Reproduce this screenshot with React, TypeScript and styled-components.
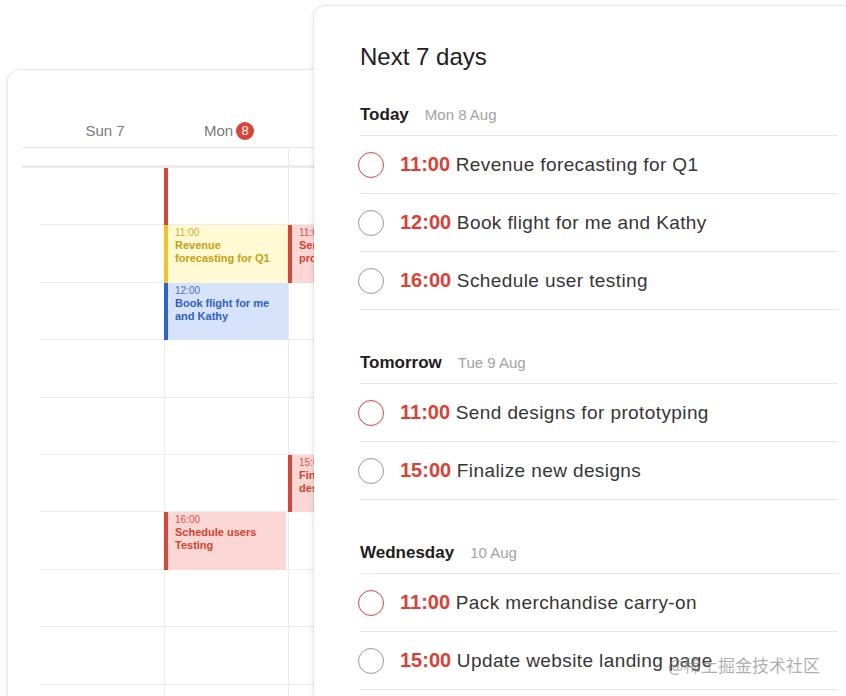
import styled, { createGlobalStyle } from "styled-components";

const GlobalStyle = createGlobalStyle`
  html, body {
    margin: 0;
    padding: 0;
    background: #ffffff;
    overflow: hidden;
  }
  body {
    font-family: "Liberation Sans", Arial, sans-serif;
  }
  * {
    box-sizing: border-box;
  }
`;

type Tone = "red" | "yellow" | "blue" | "bar";

const tones: Record<Tone, { bg: string; bar: string; text: string }> = {
  red: { bg: "#fbd8d5", bar: "#dc4535", text: "#d8412f" },
  yellow: { bg: "#fffad3", bar: "#f4c425", text: "#c8a00e" },
  blue: { bg: "#d7e3fb", bar: "#2e62d3", text: "#2d61c9" },
  bar: { bg: "transparent", bar: "#dc4535", text: "#d8412f" },
};

const Stage = styled.div`
  position: relative;
  width: 846px;
  height: 696px;
  padding: 70px 0 0 8px;
  overflow: hidden;
`;

// calendar window
const CalendarCard = styled.div`
  width: 480px;
  height: 720px;
  background: #ffffff;
  border-radius: 12px;
  box-shadow: 0 0 0 1px rgba(0, 0, 0, 0.05), 0 1px 6px rgba(0, 0, 0, 0.1);
  padding-top: 51px;
  overflow: hidden;
`;

const CalGrid = styled.div`
  margin-left: 14px;
  display: grid;
  grid-template-columns: 18px repeat(3, 124px) 1fr;
`;

const HeadRow = styled(CalGrid)`
  height: 27px;
  padding-bottom: 6px;
  border-bottom: 1px solid #e8e8e8;
  align-items: center;
`;

const DayLabel = styled.div`
  display: flex;
  align-items: center;
  justify-content: center;
  gap: 3px;
  padding-left: 6px;
  font-size: 15px;
  color: #7a7a7a;
  line-height: 20px;
`;

const TodayBadge = styled.span`
  width: 18px;
  height: 18px;
  border-radius: 50%;
  background: #dc4335;
  color: #ffffff;
  font-size: 13px;
  display: inline-flex;
  align-items: center;
  justify-content: center;
`;

const AllDayRow = styled(CalGrid)`
  height: 20px;
  border-bottom: 3px solid #ececec;
`;

const AllDayCell = styled.div<{ $line?: boolean }>`
  border-left: ${(p) => (p.$line ? "1px solid #ececec" : "none")};
`;

const HourGrid = styled(CalGrid)`
  grid-template-rows: repeat(10, 57.4px);
`;

const HourCell = styled.div<{ $row: number; $col: number }>`
  grid-row: ${(p) => p.$row};
  grid-column: ${(p) => p.$col};
  border-bottom: 1px solid #ececec;
  border-left: ${(p) => (p.$col > 2 ? "1px solid #ececec" : "none")};
`;

const Event = styled.div<{ $row: number; $col: number; $tone: Tone; $inset?: number }>`
  grid-row: ${(p) => p.$row};
  grid-column: ${(p) => p.$col};
  z-index: 1;
  margin-right: ${(p) => p.$inset ?? 0}px;
  background: ${(p) => tones[p.$tone].bg};
  border-left: 4px solid ${(p) => tones[p.$tone].bar};
  color: ${(p) => tones[p.$tone].text};
  padding: 2px 14px 0 7px;
  overflow: hidden;
`;

const EventTime = styled.div`
  font-size: 10px;
  line-height: 12px;
  opacity: 0.85;
`;

const EventTitle = styled.div`
  font-size: 11px;
  line-height: 13px;
  font-weight: 700;
`;

// next 7 days window
const TaskCard = styled.div`
  position: absolute;
  left: 314px;
  top: 6px;
  width: 560px;
  height: 720px;
  background: #ffffff;
  border-radius: 12px;
  box-shadow: 0 0 0 1px rgba(0, 0, 0, 0.05), 0 1px 8px rgba(0, 0, 0, 0.1);
  padding: 36px 36px 0 46px;
  z-index: 2;
`;

const Title = styled.h1`
  margin: 0 0 33px;
  font-size: 24px;
  line-height: 30px;
  font-weight: 400;
  color: #202020;
`;

const Section = styled.section`
  & + & {
    margin-top: 43px;
  }
`;

const SectionHead = styled.div`
  display: flex;
  align-items: baseline;
  gap: 16px;
  padding-bottom: 10px;
  border-bottom: 1px solid #e6e6e6;
`;

const DayName = styled.span`
  font-size: 17px;
  line-height: 20px;
  font-weight: 700;
  color: #202020;
`;

const DayDate = styled.span`
  font-size: 15px;
  color: #a3a3a3;
`;

const TaskRow = styled.div`
  height: 58px;
  display: flex;
  align-items: center;
  border-bottom: 1px solid #e6e6e6;
`;

const Check = styled.span<{ $active?: boolean }>`
  width: 26px;
  height: 26px;
  margin-left: -2px;
  border-radius: 50%;
  border: 1.5px solid ${(p) => (p.$active ? "#dc4335" : "#9a9a9a")};
  flex-shrink: 0;
`;

const TaskLabel = styled.span`
  margin-left: 16px;
  font-size: 19px;
  letter-spacing: 0.4px;
  color: #363636;
  white-space: nowrap;
`;

const TaskTime = styled.b`
  color: #db4035;
  font-size: 20px;
  font-weight: 700;
  letter-spacing: 0;
`;

const Watermark = styled.div`
  position: absolute;
  left: 668px;
  top: 652px;
  z-index: 3;
  font-family: "Noto Sans CJK SC", "Liberation Sans", sans-serif;
  font-size: 17px;
  color: rgba(140, 140, 140, 0.7);
  white-space: nowrap;
`;

type CalEvent = {
  row: number;
  col: number;
  tone: Tone;
  time?: string;
  title?: string;
  inset?: number;
};

const calEvents: CalEvent[] = [
  { row: 1, col: 3, tone: "bar" },
  { row: 2, col: 3, tone: "yellow", time: "11:00", title: "Revenue forecasting for Q1" },
  { row: 3, col: 3, tone: "blue", time: "12:00", title: "Book flight for me and Kathy" },
  { row: 2, col: 4, tone: "red", time: "11:00", title: "Send designs for prototyping" },
  { row: 6, col: 4, tone: "red", time: "15:00", title: "Finalize new designs" },
  { row: 7, col: 3, tone: "red", time: "16:00", title: "Schedule users Testing", inset: 2 },
];

type Task = { time: string; text: string; active?: boolean };

const sections: { day: string; date: string; tasks: Task[] }[] = [
  {
    day: "Today",
    date: "Mon 8 Aug",
    tasks: [
      { time: "11:00", text: "Revenue forecasting for Q1", active: true },
      { time: "12:00", text: "Book flight for me and Kathy" },
      { time: "16:00", text: "Schedule user testing" },
    ],
  },
  {
    day: "Tomorrow",
    date: "Tue 9 Aug",
    tasks: [
      { time: "11:00", text: "Send designs for prototyping", active: true },
      { time: "15:00", text: "Finalize new designs" },
    ],
  },
  {
    day: "Wednesday",
    date: "10 Aug",
    tasks: [
      { time: "11:00", text: "Pack merchandise carry-on", active: true },
      { time: "15:00", text: "Update website landing page" },
    ],
  },
];

function Calendar() {
  const rows = Array.from({ length: 10 }, (_, i) => i + 1);
  return (
    <CalendarCard>
      <HeadRow>
        <div />
        <DayLabel>Sun 7</DayLabel>
        <DayLabel>
          Mon <TodayBadge>8</TodayBadge>
        </DayLabel>
        <DayLabel>Tue 9</DayLabel>
      </HeadRow>
      <AllDayRow>
        <div />
        <AllDayCell />
        <AllDayCell />
        <AllDayCell $line />
      </AllDayRow>
      <HourGrid>
        {rows.map((r) =>
          [2, 3, 4].map((c) => <HourCell key={`${r}-${c}`} $row={r} $col={c} />)
        )}
        {calEvents.map((e, i) => (
          <Event key={i} $row={e.row} $col={e.col} $tone={e.tone} $inset={e.inset}>
            {e.time && <EventTime>{e.time}</EventTime>}
            {e.title && <EventTitle>{e.title}</EventTitle>}
          </Event>
        ))}
      </HourGrid>
    </CalendarCard>
  );
}

function NextDays() {
  return (
    <TaskCard>
      <Title>Next 7 days</Title>
      {sections.map((s) => (
        <Section key={s.day}>
          <SectionHead>
            <DayName>{s.day}</DayName>
            <DayDate>{s.date}</DayDate>
          </SectionHead>
          {s.tasks.map((t) => (
            <TaskRow key={t.text}>
              <Check $active={t.active} />
              <TaskLabel>
                <TaskTime>{t.time}</TaskTime> {t.text}
              </TaskLabel>
            </TaskRow>
          ))}
        </Section>
      ))}
    </TaskCard>
  );
}

export default function App() {
  return (
    <>
      <GlobalStyle />
      <Stage>
        <Calendar />
        <NextDays />
        <Watermark>@稀土掘金技术社区</Watermark>
      </Stage>
    </>
  );
}
